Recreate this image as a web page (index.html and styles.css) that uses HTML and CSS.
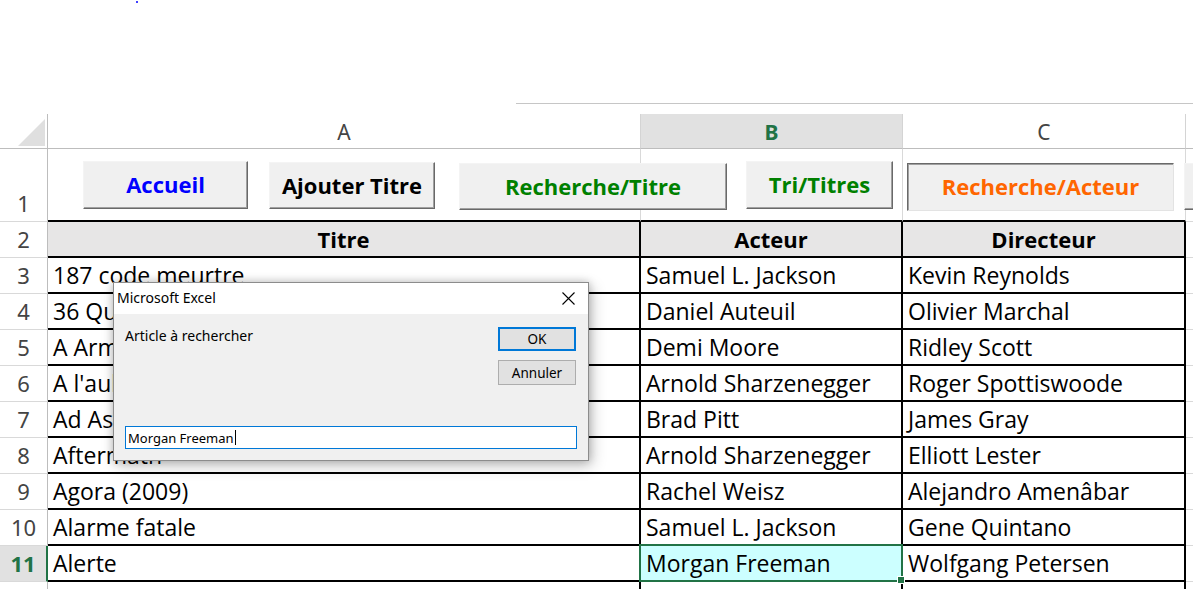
FILE: index.html
```html
<!DOCTYPE html>
<html lang="fr">
<head>
<meta charset="utf-8">
<title>Films</title>
<link rel="stylesheet" href="styles.css">
</head>
<body>
<div class="top">
  <div class="dot"></div>
  <div class="edge"></div>
</div>
<div class="sheet">
  <div class="corner"><div class="tri"></div></div>
  <div class="ch">A</div>
  <div class="ch selcol">B</div>
  <div class="ch">C</div>
  <div class="ch xh"></div>

  <div class="rh">1</div>
  <div class="r1"></div><div class="r1"></div><div class="r1"></div><div class="x"></div>

  <div class="rh">2</div>
  <div class="c h">Titre</div><div class="c h">Acteur</div><div class="c h">Directeur</div><div class="x"></div>

  <div class="rh">3</div>
  <div class="c">187 code meurtre</div><div class="c">Samuel L. Jackson</div><div class="c">Kevin Reynolds</div><div class="x"></div>

  <div class="rh">4</div>
  <div class="c">36 Quai des Orfèvres</div><div class="c">Daniel Auteuil</div><div class="c">Olivier Marchal</div><div class="x"></div>

  <div class="rh">5</div>
  <div class="c">A Armes égales</div><div class="c">Demi Moore</div><div class="c">Ridley Scott</div><div class="x"></div>

  <div class="rh">6</div>
  <div class="c">A l'aube du 6ème jour</div><div class="c">Arnold Sharzenegger</div><div class="c">Roger Spottiswoode</div><div class="x"></div>

  <div class="rh">7</div>
  <div class="c">Ad Astra</div><div class="c">Brad Pitt</div><div class="c">James Gray</div><div class="x"></div>

  <div class="rh">8</div>
  <div class="c">Aftermath</div><div class="c">Arnold Sharzenegger</div><div class="c">Elliott Lester</div><div class="x"></div>

  <div class="rh">9</div>
  <div class="c">Agora (2009)</div><div class="c">Rachel Weisz</div><div class="c">Alejandro Amenâbar</div><div class="x"></div>

  <div class="rh">10</div>
  <div class="c">Alarme fatale</div><div class="c">Samuel L. Jackson</div><div class="c">Gene Quintano</div><div class="x"></div>

  <div class="rh selrow">11</div>
  <div class="c">Alerte</div><div class="c active">Morgan Freeman</div><div class="c">Wolfgang Petersen</div><div class="x"></div>

  <div class="rh last"></div>
  <div class="c last"></div><div class="c last"></div><div class="c last"></div><div class="x last"></div>
</div>

<div class="btns">
  <div class="btn b-accueil blue">Accueil</div>
  <div class="btn b-ajout">Ajouter Titre</div>
  <div class="btn b-rtitre green">Recherche/Titre</div>
  <div class="btn b-tri green">Tri/Titres</div>
  <div class="btn b-racteur orange pressed">Recherche/Acteur</div>
  <div class="btn b-next"></div>
</div>

<div class="dlg">
  <div class="dlg-title">
    <span class="dlg-name">Microsoft Excel</span>
    <span class="close"><svg width="13" height="13" viewBox="0 0 13 13"><path d="M0.5 0.5 L12.5 12.5 M12.5 0.5 L0.5 12.5" stroke="#000" stroke-width="1.1" fill="none"/></svg></span>
  </div>
  <div class="dlg-body">
    <div class="dlg-main">
      <div class="prompt">Article à rechercher</div>
      <div class="dlg-btns">
        <div class="dbtn ok">OK</div>
        <div class="dbtn">Annuler</div>
      </div>
    </div>
    <div class="field">Morgan Freeman<span class="caret"></span></div>
  </div>
</div>
</body>
</html>
```
FILE: styles.css
```css
* { box-sizing: border-box; }
html, body { margin: 0; padding: 0; background: #fff; }
body {
  width: 1193px;
  height: 589px;
  overflow: hidden;
  position: relative;
  font-family: "Open Sans", "Noto Sans", sans-serif;
  color: #000;
}

/* area above the sheet */
.top { height: 114px; display: flex; flex-direction: column; }
.dot { margin-left: 136px; margin-top: 1px; width: 2px; height: 2px; background: #4040ff; }
.edge { margin-top: 100px; margin-left: 516px; height: 1px; background: #c6c6c6; }

/* sheet grid */
.sheet {
  display: grid;
  grid-template-columns: 48px 593px 262px 283px 7px;
  grid-template-rows: 35px 73px repeat(10, 36px) 7px;
}
.corner {
  border-right: 1px solid #bdbdbd;
  border-bottom: 1px solid #bdbdbd;
  display: flex;
  justify-content: flex-end;
  align-items: flex-end;
  padding: 0 2px 2px 0;
}
.tri {
  width: 27px;
  height: 27px;
  background: #dfdfdf;
  clip-path: polygon(100% 0, 100% 100%, 0 100%);
}
.ch {
  border-right: 1px solid #d4d4d4;
  border-bottom: 1px solid #bdbdbd;
  display: flex;
  align-items: center;
  justify-content: center;
  font-family: "Noto Sans", sans-serif;
  font-size: 21px;
  color: #444;
  padding-top: 2px;
}
.ch.selcol { background: #e1e1e1; color: #217346; font-weight: 700; }
.ch.xh { border-right: 0; }

.rh {
  border-right: 1px solid #bdbdbd;
  border-bottom: 1px solid #d9d9d9;
  display: flex;
  align-items: flex-end;
  justify-content: center;
  font-family: "Noto Sans", sans-serif;
  font-size: 22px;
  line-height: 30px;
  padding-bottom: 3px;
  color: #444;
}
.rh.selrow {
  background: #e1e1e1;
  color: #217346;
  font-weight: 700;
  border-right: 2px solid #217346;
}

.r1 {
  border-right: 1px solid #d9d9d9;
  border-bottom: 2px solid #000;
}
.x { border-bottom: 1px solid #d9d9d9; }

.c {
  border-right: 2px solid #000;
  border-bottom: 2px solid #000;
  display: flex;
  align-items: flex-end;
  padding: 0 5px 2px;
  font-size: 23px;
  line-height: 30px;
  white-space: nowrap;
  overflow: hidden;
}
.c.h {
  background: #e7e6e6;
  font-weight: 700;
  font-size: 22px;
  justify-content: center;
}
.last { border-bottom: 0; }
.c.last { border-bottom: 0; }
.x.last { border-bottom: 0; }
.c.active {
  background: #ccffff;
  position: relative;
  overflow: visible;
}
.c.active::before {
  content: "";
  position: absolute;
  left: -2px;
  top: -2px;
  right: -2px;
  bottom: -2px;
  border: 2px solid #217346;
}
.c.active::after {
  content: "";
  position: absolute;
  right: -4px;
  bottom: -4px;
  width: 6px;
  height: 6px;
  background: #217346;
  border: 1px solid #fff;
}

/* floating buttons over row 1 */
.btns {
  position: absolute;
  left: 83px;
  top: 161px;
  display: flex;
  align-items: flex-start;
}
.btn {
  background: #f0f0f0;
  border-top: 1px solid #f4f4f4;
  border-left: 1px solid #f4f4f4;
  border-right: 1px solid #696969;
  border-bottom: 1px solid #696969;
  box-shadow: inset -1px -1px 0 #a0a0a0;
  display: flex;
  align-items: center;
  justify-content: center;
  font-family: "Open Sans", sans-serif;
  font-weight: 700;
  font-size: 22px;
  padding-bottom: 2px;
  white-space: nowrap;
}
.btn.pressed {
  border-top: 1px solid #696969;
  border-left: 1px solid #696969;
  border-right: 1px solid #e3e3e3;
  border-bottom: 1px solid #e3e3e3;
  box-shadow: inset 1px 1px 0 #a0a0a0;
}
.blue { color: #0000ff; }
.green { color: #008000; }
.orange { color: #ff6600; }
.b-accueil { width: 165px; height: 48px; }
.b-ajout { width: 166px; height: 47px; margin-left: 21px; margin-top: 1px; }
.b-rtitre { width: 268px; height: 47px; margin-left: 24px; margin-top: 2px; }
.b-tri { width: 147px; height: 48px; margin-left: 19px; }
.b-racteur { width: 267px; height: 48px; margin-left: 14px; margin-top: 2px; }
.b-next { width: 20px; height: 47px; margin-left: 10px; margin-top: 2px; }

/* input dialog */
.dlg {
  position: absolute;
  left: 113px;
  top: 282px;
  width: 476px;
  height: 179px;
  background: #f0f0f0;
  border: 1px solid #8c8c8c;
  box-shadow: 0 0 8px rgba(0, 0, 0, 0.22), 3px 5px 14px rgba(0, 0, 0, 0.22);
  display: flex;
  flex-direction: column;
  font-family: "Noto Sans", "Open Sans", sans-serif;
  font-size: 14px;
  color: #000;
}
.dlg-title {
  height: 31px;
  background: #fff;
  display: flex;
  align-items: center;
  justify-content: space-between;
  padding-left: 3px;
}
.dlg-name { line-height: 18px; margin-top: -2px; }
.close {
  width: 40px;
  height: 31px;
  display: flex;
  align-items: center;
  justify-content: center;
}
.dlg-body {
  flex: 1;
  display: flex;
  flex-direction: column;
  justify-content: space-between;
  padding: 13px 11px 11px 11px;
}
.dlg-main { display: flex; justify-content: space-between; }
.prompt { line-height: 17px; margin-top: 0; }
.dlg-btns { display: flex; flex-direction: column; gap: 9px; margin-right: 1px; }
.dbtn {
  width: 78px;
  height: 25px;
  background: #e1e1e1;
  border: 1px solid #adadad;
  display: flex;
  align-items: center;
  justify-content: center;
  font-size: 13.5px;
}
.dbtn.ok { height: 24px; border: 2px solid #0078d7; }
.field {
  height: 23px;
  background: #fff;
  border: 1px solid #0078d7;
  display: flex;
  align-items: center;
  padding-left: 2px;
  font-size: 13px;
}
.caret { display: inline-block; width: 1px; height: 15px; background: #000; margin-left: 1px; }
```
